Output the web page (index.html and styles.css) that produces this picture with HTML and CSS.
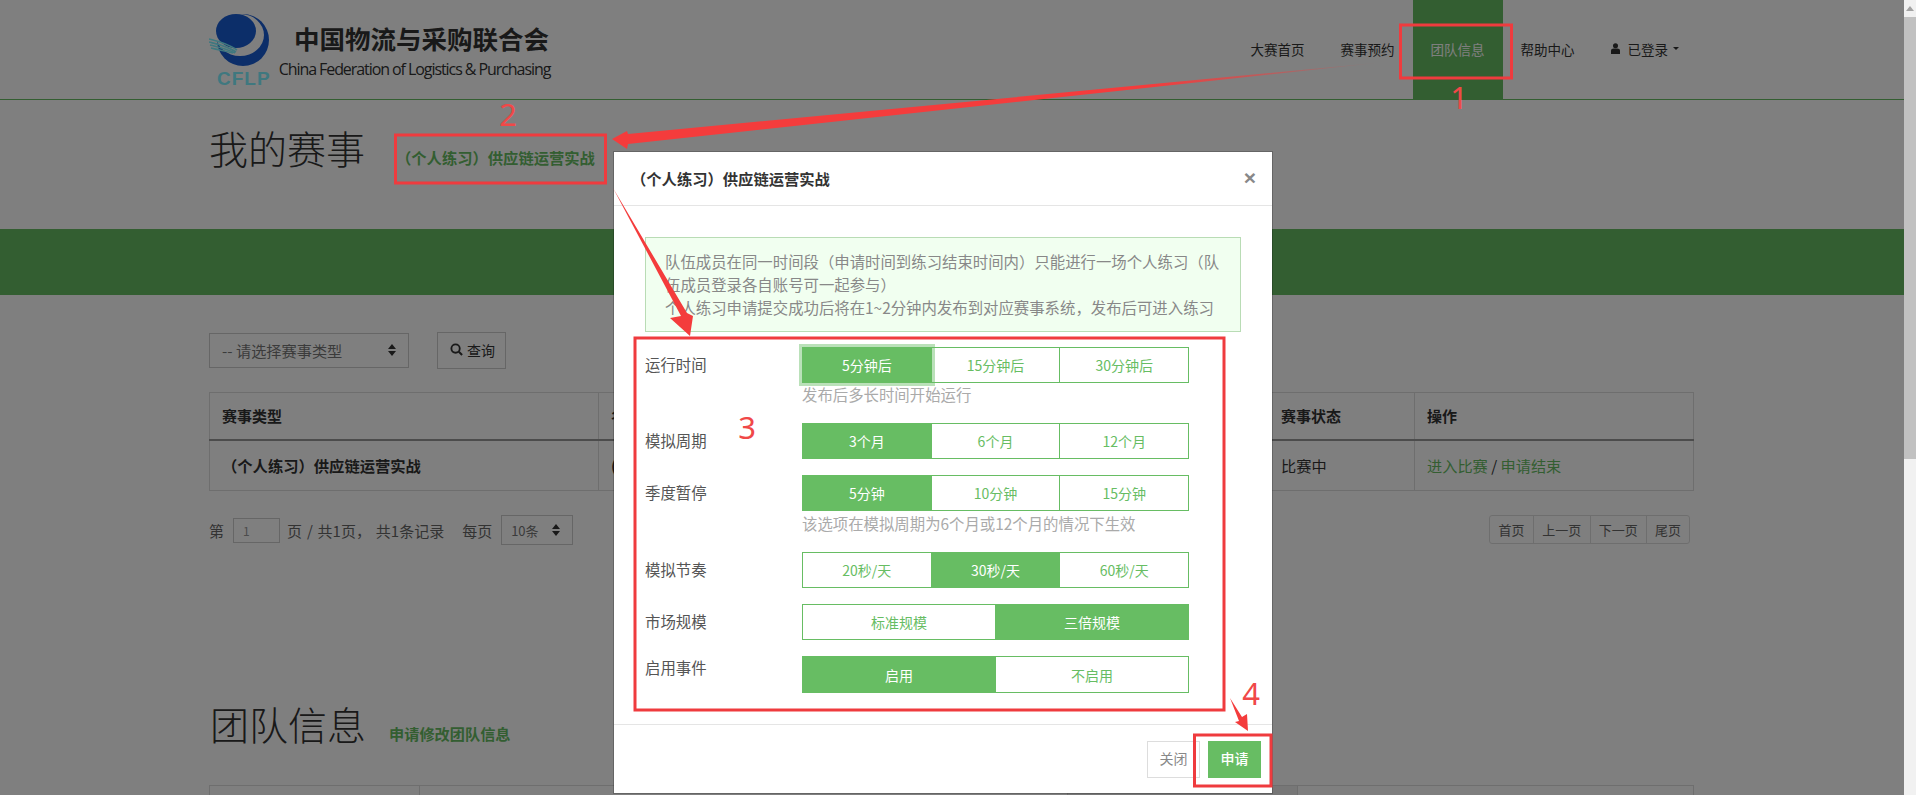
FILE: index.html
```html
<!DOCTYPE html>
<html lang="zh-CN">
<head>
<meta charset="utf-8">
<title>我的赛事</title>
<link rel="stylesheet" href="styles.css">
</head>
<body>
<div class="viewport">
  <div class="page">
    <header class="topbar">
      <div class="brand">
        <svg class="brand-mark" viewBox="0 0 62 76" width="62" height="76">
          <circle cx="34" cy="27" r="26" fill="#185cd2"/>
          <ellipse cx="31" cy="22" rx="24" ry="21" fill="#fff"/>
          <ellipse cx="27" cy="18" rx="20" ry="17" fill="#185cd2"/>
          <g fill="none" stroke="#7ef0ff" stroke-width="1.6">
            <path d="M0 26 C8 28 18 30 28 37"/>
            <path d="M0 29 C8 31 18 33 27 39"/>
            <path d="M1 32 C9 34 18 36 26 40"/>
            <path d="M2 35 C10 37 16 38 24 40"/>
          </g>
          <text class="brand-cflp" x="8" y="72">CFLP</text>
        </svg>
        <div class="brand-text">
          <div class="brand-cn">中国物流与采购联合会</div>
          <div class="brand-en">China Federation of Logistics &amp; Purchasing</div>
        </div>
      </div>
      <nav class="nav">
        <a class="nav-item">大赛首页</a>
        <a class="nav-item">赛事预约</a>
        <a class="nav-item is-active">团队信息</a>
        <a class="nav-item">帮助中心</a>
        <a class="nav-item nav-user">
          <svg class="user-icon" viewBox="0 0 10 12" width="9" height="11"><circle cx="5" cy="3" r="2.8" fill="#333"/><path d="M0 12 V8 Q0 6 3 6 H7 Q10 6 10 8 V12Z" fill="#333"/></svg>
          已登录<span class="caret"></span>
        </a>
      </nav>
    </header>

    <section class="title-row">
      <h1 class="page-title">我的赛事</h1>
      <a class="title-link">（个人练习）供应链运营实战</a>
    </section>

    <div class="band"></div>

    <div class="filters">
      <div class="select select-type">-- 请选择赛事类型
        <svg class="updown" viewBox="0 0 8 12" width="8" height="12"><path d="M4 0 L8 5 H0Z M4 12 L0 7 H8Z" fill="#333"/></svg>
      </div>
      <button class="query-btn">
        <svg viewBox="0 0 14 14" width="13" height="13"><circle cx="6" cy="6" r="4.5" fill="none" stroke="#333" stroke-width="2"/><path d="M9.5 9.5 L13 13" stroke="#333" stroke-width="2.2"/></svg>
        查询
      </button>
    </div>

    <table class="table">
      <colgroup><col class="col-a"><col><col class="col-c"><col class="col-d"></colgroup>
      <thead>
        <tr><th>赛事类型</th><th>名称</th><th>赛事状态</th><th>操作</th></tr>
      </thead>
      <tbody>
        <tr>
          <td class="strong">（个人练习）供应链运营实战</td>
          <td class="strong">(个人练习) 供应链运营实战</td>
          <td>比赛中</td>
          <td><a class="link">进入比赛</a> / <a class="link">申请结束</a></td>
        </tr>
      </tbody>
    </table>

    <div class="pagination">
      <div class="page-info">
        <span>第</span>
        <span class="page-input">1</span>
        <span class="page-count">页 / 共1页， 共1条记录</span>
        <span class="per-page">每页</span>
        <div class="select select-size">10条
          <svg class="updown" viewBox="0 0 8 12" width="8" height="12"><path d="M4 0 L8 5 H0Z M4 12 L0 7 H8Z" fill="#333"/></svg>
        </div>
      </div>
      <div class="pager">
        <a class="pager-item pager-2">首页</a>
        <a class="pager-item pager-3">上一页</a>
        <a class="pager-item pager-3">下一页</a>
        <a class="pager-item pager-2">尾页</a>
      </div>
    </div>

    <section class="title-row title-row-team">
      <h1 class="page-title">团队信息</h1>
      <a class="title-link title-link-team">申请修改团队信息</a>
    </section>

    <div class="team-head">
      <div class="team-cell team-a"></div>
      <div class="team-cell team-b"></div>
      <div class="team-cell team-c"></div>
      <div class="team-cell team-d"></div>
    </div>
  </div>

  <div class="backdrop"></div>

  <div class="modal">
    <div class="modal-head">
      <div class="modal-title">（个人练习）供应链运营实战</div>
      <span class="modal-close">×</span>
    </div>
    <div class="modal-body">
      <div class="alert">
        队伍成员在同一时间段（申请时间到练习结束时间内）只能进行一场个人练习（队伍成员登录各自账号可一起参与）<br>
        个人练习申请提交成功后将在1~2分钟内发布到对应赛事系统，发布后可进入练习
      </div>
      <div class="form">
        <div class="form-row">
          <div class="form-label">运行时间</div>
          <div class="form-field">
            <div class="btn-group">
              <a class="opt is-on is-focus">5分钟后</a><a class="opt">15分钟后</a><a class="opt">30分钟后</a>
            </div>
            <div class="help">发布后多长时间开始运行</div>
          </div>
        </div>
        <div class="form-row">
          <div class="form-label">模拟周期</div>
          <div class="form-field">
            <div class="btn-group">
              <a class="opt is-on">3个月</a><a class="opt">6个月</a><a class="opt">12个月</a>
            </div>
          </div>
        </div>
        <div class="form-row">
          <div class="form-label">季度暂停</div>
          <div class="form-field">
            <div class="btn-group">
              <a class="opt is-on">5分钟</a><a class="opt">10分钟</a><a class="opt">15分钟</a>
            </div>
            <div class="help help-wide">该选项在模拟周期为6个月或12个月的情况下生效</div>
          </div>
        </div>
        <div class="form-row">
          <div class="form-label">模拟节奏</div>
          <div class="form-field">
            <div class="btn-group">
              <a class="opt">20秒/天</a><a class="opt is-on">30秒/天</a><a class="opt">60秒/天</a>
            </div>
          </div>
        </div>
        <div class="form-row">
          <div class="form-label">市场规模</div>
          <div class="form-field">
            <div class="btn-group">
              <a class="opt">标准规模</a><a class="opt is-on">三倍规模</a>
            </div>
          </div>
        </div>
        <div class="form-row form-row-top">
          <div class="form-label">启用事件</div>
          <div class="form-field">
            <div class="btn-group btn-group-tall">
              <a class="opt is-on">启用</a><a class="opt">不启用</a>
            </div>
          </div>
        </div>
      </div>
    </div>
    <div class="modal-foot">
      <button class="foot-btn">关闭</button>
      <button class="foot-btn foot-primary">申请</button>
    </div>
  </div>

  <svg class="marks" viewBox="0 0 1904 795" width="1904" height="795">
    <defs>
      <linearGradient id="fade" gradientUnits="userSpaceOnUse" x1="1385" y1="62" x2="1150" y2="85">
        <stop offset="0" stop-color="#f43c3c" stop-opacity="0"/>
        <stop offset="1" stop-color="#f43c3c" stop-opacity="1"/>
      </linearGradient>
    </defs>
    <g class="mark-box">
      <rect x="1400.5" y="25" width="111" height="53"/>
      <rect x="395.5" y="135" width="210" height="48"/>
      <rect x="635" y="338" width="589" height="372"/>
      <rect x="1194.5" y="735" width="76.5" height="51"/>
    </g>
    <polygon fill="url(#fade)" points="1385,62 628,134 627,131 612,139 627,149 628,144"/>
    <polygon class="mark-fill" points="613,188 687,313 693,316 690,336 670,318 681,316"/>
    <polygon class="mark-fill" points="1230,698 1242,717 1247,714 1248,731 1235,722 1239,721"/>
    <text class="mark-num" x="1459" y="109">1</text>
    <text class="mark-num" x="508" y="126">2</text>
    <text class="mark-num" x="747" y="439">3</text>
    <text class="mark-num" x="1251" y="705">4</text>
  </svg>
</div>
<div class="scrollbar">
  <div class="scroll-up"></div>
  <div class="scroll-thumb"></div>
</div>
</body>
</html>
```

FILE: styles.css
```css
* { box-sizing: border-box; }
html, body { margin: 0; height: 100%; overflow: hidden; }
body {
  display: flex;
  font-family: "Noto Sans CJK SC", "Noto Sans", sans-serif;
  font-size: 14px;
  color: #333;
  background: #fff;
}
.viewport { position: relative; width: 1904px; height: 795px; overflow: hidden; flex: none; }
.page { width: 1904px; height: 795px; overflow: hidden; }

/* top bar */
.topbar {
  display: flex;
  justify-content: space-between;
  height: 100px;
  padding: 0 207px 0 209px;
  border-bottom: 1px solid #67bd63;
}
.brand { display: flex; align-items: flex-start; }
.brand-mark { margin-top: 13px; flex: none; }
.brand-cflp { font: bold 19px "Liberation Sans", sans-serif; letter-spacing: 1px; fill: #7ef0ff; }
.brand-text { width: 273px; margin-left: 7px; text-align: center; color: #333; }
.brand-cn { margin-top: 19px; font-size: 25.5px; line-height: 38px; font-weight: 700; padding-left: 14px; white-space: nowrap; }
.brand-en { margin-top: -3px; font: 16px/30px "Open Sans", sans-serif; letter-spacing: -1.07px; white-space: nowrap; }
.nav { display: flex; height: 99px; }
.nav-item {
  display: flex;
  align-items: center;
  height: 99px;
  padding: 0 18px 2px;
  font-size: 13.5px;
  color: #333;
}
.nav-item.is-active { background: #67bd63; color: #fff; }
.user-icon { margin: 0 8px 0 0; }
.caret {
  width: 0; height: 0; margin-left: 5px;
  border-top: 3px solid #333;
  border-left: 3px solid transparent;
  border-right: 3px solid transparent;
}

/* titles */
.title-row { display: flex; align-items: flex-start; height: 129px; padding-left: 209px; }
.page-title { margin: 25px 0 0; font-size: 39px; line-height: 44px; font-weight: 300; color: #333; }
.title-link { margin: 46px 0 0 31px; font-size: 15.3px; line-height: 22px; font-weight: 700; color: #67bd63; }
.title-row-team { height: 88px; margin-top: 152px; padding-left: 210px; }
.title-row-team .page-title { margin-top: 4px; }
.title-link-team { margin: 25px 0 0 23px; font-size: 15.2px; }

.band { height: 66px; background: #67bd63; }

/* filters */
.filters { display: flex; align-items: center; height: 37px; margin: 37px 0 0 209px; }
.select {
  display: flex;
  align-items: center;
  justify-content: space-between;
  border: 1px solid #ccc;
  color: #777;
}
.select-type { width: 200px; height: 35px; padding: 0 12px 2px; font-size: 15.2px; }
.query-btn {
  display: flex;
  align-items: center;
  gap: 4px;
  width: 69px;
  height: 37px;
  margin-left: 28px;
  padding: 0 0 2px 12px;
  border: 1px solid #ccc;
  background: #fff;
  font: 14px "Noto Sans CJK SC", sans-serif;
  color: #333;
}

/* table */
.table {
  width: 1485px;
  margin: 23px 0 0 209px;
  border-collapse: collapse;
  table-layout: fixed;
  border: 1px solid #ddd;
}
.col-a { width: 389px; }
.col-c { width: 146px; }
.col-d { width: 279px; }
.table th, .table td { padding: 0 12px; border-left: 1px solid #ddd; text-align: left; white-space: nowrap; overflow: hidden; }
.table th { height: 47px; border-bottom: 2px solid #999; font-size: 15px; font-weight: 700; color: #333; }
.table td { height: 51px; font-size: 15.2px; color: #333; }
.table td.strong { font-size: 15.3px; font-weight: 700; }
.link { color: #67bd63; }

/* pagination */
.pagination { display: flex; justify-content: space-between; width: 1481px; margin: 24px 0 0 209px; height: 30px; }
.page-info { display: flex; align-items: center; font-size: 15px; color: #666; }
.page-input {
  width: 47px; height: 25px; margin-left: 9px; padding-left: 9px;
  border: 1px solid #ccc; font-size: 12px; line-height: 23px; color: #999;
}
.page-count { margin-left: 7px; word-spacing: 1.5px; }
.per-page { margin-left: 18px; }
.select-size { width: 72px; height: 30px; margin-left: 9px; padding: 0 12px 0 9px; font-size: 13px; }
.pager { display: flex; height: 29px; border: 1px solid #ddd; border-radius: 3px; }
.pager-item { display: flex; align-items: center; justify-content: center; font-size: 13px; color: #666; border-left: 1px solid #ddd; }
.pager-item:first-child { border-left: 0; }
.pager-2 { width: 43px; }
.pager-3 { width: 56.5px; }

/* team table head */
.team-head { display: flex; width: 1485px; height: 40px; margin-left: 209px; border: 1px solid #ddd; }
.team-cell { border-left: 1px solid #ddd; }
.team-a { width: 209px; border-left: 0; }
.team-b { width: 648px; }
.team-c { width: 230px; background: #eee; }
.team-d { flex: 1; }

/* overlay */
.backdrop { position: absolute; inset: 0; background: rgba(0, 0, 0, 0.5); }

.modal {
  position: absolute;
  left: 614px;
  top: 152px;
  width: 658px;
  height: 641px;
  background: #fff;
  box-shadow: 0 0 0 1px rgba(0, 0, 0, 0.2);
  display: flex;
  flex-direction: column;
}
.modal-head {
  display: flex;
  justify-content: space-between;
  align-items: center;
  height: 54px;
  padding: 0 16px 2px 17px;
  border-bottom: 1px solid #e5e5e5;
}
.modal-title { font-size: 15.3px; font-weight: 700; color: #333; }
.modal-close { font: bold 21px "Liberation Sans", sans-serif; color: #888; }
.modal-body { flex: 1; padding: 31px 31px 0 31px; }
.alert {
  width: 596px;
  height: 95px;
  padding: 12px 9px 0 19px;
  border: 1px solid #b9dcb5;
  background: #f1fff0;
  font-size: 15.4px;
  line-height: 23px;
  color: #888;
}
.form { margin-top: 15px; }
.form-row { display: flex; margin-bottom: 16px; }
.form-label { width: 157px; flex: none; font-size: 15.4px; line-height: 34px; color: #555; }
.form-row-top .form-label { line-height: 22px; }
.form-field { width: 387px; }
.btn-group { display: flex; height: 36px; }
.btn-group-tall { height: 37px; }
.opt {
  flex: 1;
  display: flex;
  align-items: center;
  justify-content: center;
  border: 1px solid #67bd63;
  margin-left: -1px;
  font-size: 14px;
  color: #67bd63;
  background: #fff;
}
.opt:first-child { margin-left: 0; }
.opt.is-on { background: #67bd63; color: #fff; }
.opt.is-focus { box-shadow: 0 0 0 3px rgba(103, 189, 99, 0.45); position: relative; z-index: 1; }
.help { height: 24px; font-size: 15.4px; line-height: 23px; color: #aaa; white-space: nowrap; }
.help-wide { height: 25px; line-height: 24px; }

.modal-foot {
  display: flex;
  justify-content: flex-end;
  gap: 8px;
  height: 69px;
  padding: 16px 11px 0 0;
  border-top: 1px solid #e5e5e5;
}
.foot-btn {
  width: 53px;
  height: 37px;
  padding: 0 0 3px;
  border: 1px solid #ddd;
  background: #fff;
  font: 14px "Noto Sans CJK SC", sans-serif;
  color: #888;
}
.foot-primary { border-color: #67bd63; background: #67bd63; color: #fff; font-weight: 500; }

/* annotations */
.marks { position: absolute; left: 0; top: 0; pointer-events: none; }
.mark-box rect { fill: none; stroke: #ef3b3e; stroke-width: 3; }
.mark-fill { fill: #f43c3c; }
.mark-num { font: 31px "Noto Sans", sans-serif; fill: #f04848; text-anchor: middle; }

/* scrollbar */
.scrollbar { width: 12px; height: 795px; flex: none; background: #f1f1f1; }
.scroll-up { height: 17px; display: flex; align-items: center; justify-content: center; }
.scroll-up::before { content: ""; border-bottom: 5px solid #a3a3a3; border-left: 4px solid transparent; border-right: 4px solid transparent; }
.scroll-thumb { height: 442px; background: #c1c1c1; }
```
